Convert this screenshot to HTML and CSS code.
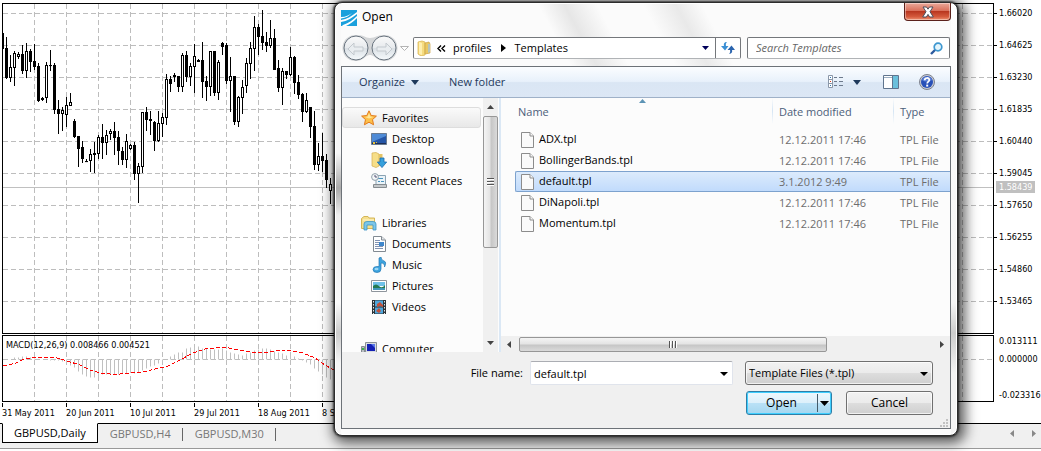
FILE: index.html
```html
<!DOCTYPE html>
<html lang="en">
<head>
<meta charset="utf-8">
<title>Open template</title>
<link rel="stylesheet" href="styles.css">
</head>
<body>
<main class="terminal">
  <section class="pane">
    <svg class="plot price-plot" aria-label="GBPUSD daily chart">
      <defs>
        <pattern id="grid" width="32" height="32" patternUnits="userSpaceOnUse">
          <path class="grid-line" d="M0 9.5H32M31.5 0V32"/>
        </pattern>
        <pattern id="columns" width="32" height="32" patternUnits="userSpaceOnUse">
          <path class="grid-line" d="M31.5 0V32"/>
        </pattern>
      </defs>
      <rect width="100%" height="100%" fill="url(#grid)"/>
      <line class="bid-line" x1="0" x2="100%" y1="183.5" y2="183.5"/>
      <g id="candles" transform="translate(-3 -4)"></g>
    </svg>
    <div class="scale price-scale">
      <span>1.66020</span><span>1.64625</span><span>1.63230</span><span>1.61835</span><span>1.60440</span><span>1.59045</span><span>1.57650</span><span>1.56255</span><span>1.54860</span><span>1.53465</span>
      <b class="bid">1.58439</b>
    </div>
  </section>
  <section class="pane">
    <svg class="plot macd-plot" aria-label="MACD indicator">
      <rect width="100%" height="100%" fill="url(#columns)"/>
      <line class="grid-line" x1="0" x2="100%" y1="23.5" y2="23.5"/>
      <g transform="translate(-3 -336)">
        <path id="histogram" class="histogram"/>
        <path class="signal" d="M3 366L16 363 22 360 32 357.500 55 357.500 67 361 80 365 90 370 100 373 115 374.500 130 373 143 372 155 369 168 366 180 360 193 353 207 348.500 226 347.500 240 350 255 352.500 270 352 282 350 293 351 303 353 315 358 325 365 334 370"/>
      </g>
      <text class="macd-label" x="3" y="12">MACD(12,26,9) 0.008466 0.004521</text>
    </svg>
    <div class="scale macd-scale"><span>0.013111</span><span>0.000000</span><span>-0.023316</span></div>
  </section>
  <div class="dates">
    <span>31 May 2011</span><span>20 Jun 2011</span><span>10 Jul 2011</span><span>29 Jul 2011</span><span>18 Aug 2011</span><span>8 Sep 2011</span>
  </div>
  <nav class="tabs">
    <button class="tab active">GBPUSD,Daily</button>
    <button class="tab">GBPUSD,H4</button>
    <button class="tab">GBPUSD,M30</button>
    <svg class="tab-arrows" width="26" height="9" aria-hidden="true"><path d="M4 1V8L0 4.500ZM22 1V8L26 4.500Z"/></svg>
  </nav>
</main>

<div class="dialog" role="dialog" aria-labelledby="dialog-title">
  <header class="titlebar">
    <svg width="16" height="16" aria-hidden="true">
      <rect width="16" height="16" fill="#1aa0dc"/>
      <path d="M0 10C6 9 11 6 16 2V4C11 8 6 11 0 12ZM2 15C8 13 12 10 16 6V8C12 12 9 14 5 16H1ZM0 7C5 7 8 5 11 3 8 6 5 8 0 8.500Z" fill="#fff"/>
    </svg>
    <h1 id="dialog-title">Open</h1>
    <button class="close" aria-label="Close">
      <svg width="14" height="12" viewBox="0 0 14 12"><path d="M2 1H5.500L7 3.200 8.500 1H12L9 5.700 12.300 11H8.600L7 8.400 5.400 11H1.700L5 5.700Z" fill="#fff" stroke="#4b4f5c" stroke-width="1"/></svg>
    </button>
  </header>

  <div class="location">
    <svg class="history" width="68" height="28" aria-hidden="true">
      <defs><linearGradient id="orb" x2="0" y2="1"><stop stop-color="#fafafa"/><stop offset=".48" stop-color="#e8ebee"/><stop offset=".5" stop-color="#d9dfe4"/><stop offset="1" stop-color="#f6fafc"/></linearGradient></defs>
      <path d="M14 1C24 1 22 4 28 4S34 1 42 1C60 1 60 27 42 27 34 27 33 21 28 21S22 27 14 27C-4 27-4 1 14 1Z" fill="#d4d6d8"/>
      <g fill="url(#orb)" stroke="#68737e"><circle cx="14" cy="14" r="12"/><circle cx="42" cy="14" r="12"/></g>
      <g fill="#e9edf0" stroke="#c3c9ce"><path d="M6 15L12 9V13H21V17H12V21Z"/><path d="M50 15L44 9V13H35V17H44V21Z"/></g>
      <path d="M58.500 12.500H66.500L62.500 16.500Z" fill="#fff" stroke="#b4b4b4"/>
    </svg>
    <div class="address">
      <svg width="16" height="16" viewBox="0 0 16 16" aria-hidden="true"><path d="M2 2L6 1 9 2V15L5 16 2 14Z" fill="#f6dc80" stroke="#d6b04a" stroke-width=".7"/><path d="M9 3L13 2 14 4V13L9 14Z" fill="#e9c863" stroke="#caa244" stroke-width=".7"/><path d="M3 2L6 3V15L3 14Z" fill="#fff0b0"/><path d="M12 4H14V12L12 13Z" fill="#b5c4be"/></svg>
      <svg class="chevrons" width="9" height="7" aria-hidden="true"><path d="M4 .5L1 3.500 4 6.500M8 .5L5 3.500 8 6.500"/></svg>
      <span class="crumb">profiles</span>
      <svg width="5" height="8" aria-hidden="true"><path d="M0 0L5 4 0 8Z"/></svg>
      <span class="crumb">Templates</span>
      <svg class="address-caret" width="7" height="4" aria-hidden="true"><path d="M0 0H7L3.500 4Z" fill="#00005a"/></svg>
      <button class="refresh" aria-label="Refresh">
        <svg width="14" height="14" viewBox="0 0 14 14"><path d="M6 1C3 1 2.500 3 3 5H0L4 9.500 7.500 5H5C4.600 3.500 5 2 6 1Z" fill="#3b8fd4"/><path d="M8 13C11 12.500 11.500 11 11 9H14L10.500 4.500 6.500 9H9C9.500 10.500 9 12 8 13Z" fill="#2a64ae"/></svg>
      </button>
    </div>
    <div class="search">
      <input type="text" placeholder="Search Templates" aria-label="Search Templates">
      <svg width="13" height="13" viewBox="0 0 13 13" aria-hidden="true"><path d="M1 12L5.500 7.500" stroke="#2c5a9e" stroke-width="2.400"/><circle cx="8" cy="5" r="3.800" fill="#e4f5fc" stroke="#3e97d0" stroke-width="1.700"/></svg>
    </div>
  </div>

  <div class="client">
    <div class="toolbar">
      <button>Organize <svg width="8" height="5" aria-hidden="true"><path d="M0 0H8L4 5Z"/></svg></button>
      <button>New folder</button>
      <div class="tools">
        <button aria-label="Change view"><svg width="30" height="14" viewBox="0 0 30 14">
          <g fill="#fff" stroke="#8a97a8"><path d="M.5.5H4.500V12.500H.5ZM.5 4.500H4.500M.5 8.500H4.500"/></g>
          <path d="M6 2.500H9M11 2.500H15M6 6.500H9M11 6.500H15M6 10.500H9M11 10.500H15" stroke="#6d7a8c"/>
          <path d="M2 2H3V3H2ZM2 10H3V11H2Z" fill="#2878b8"/><path d="M2 6H3V7H2Z" fill="#d33a22"/>
          <path d="M25 5H33L29 9Z" fill="none"/></svg></button>
        <button class="view-caret" aria-label="More views"><svg width="8" height="5"><path d="M0 0H8L4 5Z"/></svg></button>
        <button aria-label="Preview pane"><svg width="16" height="14"><path d="M.5.5H15.500V13.500H.5Z" fill="#fff" stroke="#60758e"/><path d="M1 2.500H15" stroke="#9dafc2"/><path d="M10 1H15V13H10Z" fill="#6bc0dc"/><path d="M9.500 1V13" stroke="#60758e"/></svg></button>
        <button aria-label="Help"><svg width="16" height="16"><circle cx="8" cy="8" r="7.500" fill="#c9ccd4" stroke="#7d828e"/><circle cx="8" cy="8" r="6" fill="#2850b8"/><path d="M3 6A5.500 5.500 0 0 1 13 6C10 8 6 8 3 6Z" fill="#5d82d8"/><path d="M5.700 6.300C5.700 3.200 10.400 3.300 10.300 6 10.200 7.700 8.200 7.500 8.200 9.600" fill="none" stroke="#fff" stroke-width="1.700"/><rect x="7.200" y="10.600" width="2" height="2" fill="#fff"/></svg></button>
      </div>
    </div>

    <div class="browser">
      <ul class="places">
        <li class="group current"><svg viewBox="0 0 16 16"><path d="M8 .8L10.200 5.500 15.400 6.100 11.500 9.600 12.600 14.800 8 12.200 3.400 14.800 4.500 9.600.6 6.100 5.800 5.500Z" fill="#fdc04a" stroke="#e27a1c"/><path d="M8 3L9.300 6.500 12.500 7 8 8.500 4 7 6.700 6.500Z" fill="#ffe79a"/></svg>Favorites</li>
        <li><svg viewBox="0 0 16 16"><path d="M.5 2.500H15.500V13.500H.5Z" fill="#2455a6" stroke="#697b91"/><path d="M1 3H15V5L1 11Z" fill="#4f8bd6"/><path d="M1 12.500H15" stroke="#1c2e55"/><path d="M2 11H4V13H2ZM5 11H6V12H5Z" fill="#e8c338"/></svg>Desktop</li>
        <li><svg viewBox="0 0 16 16"><path d="M1 1L5 .5 8 2V14L5 15.500 1 14Z" fill="#f6de88" stroke="#d2ae50" stroke-width=".7"/><path d="M8 2H11.500V13L8 14Z" fill="#e5c466"/><path d="M9 6H13V10H15.700L11 15.600 6.300 10H9Z" fill="#36a0dc" stroke="#1a6cb0" stroke-width=".8"/></svg>Downloads</li>
        <li><svg viewBox="0 0 16 16"><path d="M5 2.500H14.500V11.500H5Z" fill="#eaf3f8" stroke="#8ba3b3"/><path d="M7 5.500H12M7 8.500H9M10 8.500H13" stroke="#4b94bd"/><path d="M2.500 11.500H15.500V14.500H2.500Z" fill="#c5c9cb" stroke="#868c90"/><circle cx="4" cy="4" r="3.400" fill="#f3f6f8" stroke="#92a1ab"/><path d="M4 2V4H6" fill="none" stroke="#557"/></svg>Recent Places</li>
        <li class="group spaced"><svg viewBox="0 0 16 16"><path d="M.5 13.500V3.500L3 1.500H7L8 3H13.500V13.500Z" fill="#f6df8e" stroke="#d4b656"/><path d="M2 5H13" stroke="#fff6cd"/><path d="M3 15V9Q3 6.500 6 6.500H12Q15 6.500 15 9V15H12V10H6V15Z" fill="#7cc6e8" stroke="#3d95c4" stroke-width=".8"/></svg>Libraries</li>
        <li><svg viewBox="0 0 16 16"><path d="M2.500.5H10.500L14.500 4V15.500H2.500Z" fill="#fff" stroke="#828a92"/><path d="M10.500.5V4H14.500" fill="#e3e6e9" stroke="#828a92"/><path d="M4 4.500H9M4 6.500H8M4 8.500H8M4 10.500H12M4 12.500H12" stroke="#8293b2"/><path d="M8 6H13V10H8Z" fill="#3f87cc"/></svg>Documents</li>
        <li><svg viewBox="0 0 16 16"><path d="M8 1L10 0Q10 3 13 4T13.500 10Q14 6 10 6V12Q10 15.500 6 15.500T2 12.500 6 9.500H8Z" fill="#3da4df" stroke="#2279b5" stroke-width=".7"/><ellipse cx="5.500" cy="12" rx="2" ry="1.200" fill="#9ad6f5"/></svg>Music</li>
        <li><svg viewBox="0 0 16 16"><path d="M.5 2.500H15.500V13.500H.5Z" fill="#fff" stroke="#8e959c"/><path d="M2 4H14V8H2Z" fill="#6fc1e9"/><path d="M2 8Q5 5 8 8T14 7V10H2Z" fill="#247a52"/><path d="M2 10H14V12H2Z" fill="#4297bb"/></svg>Pictures</li>
        <li><svg viewBox="0 0 16 16"><path d="M1 1H15V15H1Z" fill="#2c3237"/><path d="M4 1.500H12V7.500H4ZM4 8.500H12V14.500H4Z" fill="#4fa7dc"/><path d="M6 5L9 3 12 6V8L9 7 6 8ZM5 12L8 9 10 12 8 14Z" fill="#c3513a"/><path d="M2.500 2V15M13.500 2V15" stroke="#dfe5e8" stroke-dasharray="1.500 1.500"/></svg>Videos</li>
        <li class="group spaced"><svg viewBox="0 0 16 16"><path d="M4.500 1.500H15.500V11.500H4.500Z" fill="#d8dce0" stroke="#8b9197"/><path d="M6 3H14V10H6Z" fill="#1420b4"/><path d="M10 3H14V7Z" fill="#5a78e8"/><path d="M.5 5.500H3.500V14.500H.5Z" fill="#b9bec2" stroke="#858b90"/><path d="M1 7H3V9H1Z" fill="#37b34a"/></svg>Computer</li>
      </ul>
      <div class="vscroll" aria-hidden="true">
        <svg width="7" height="4"><path d="M0 4H7L3.500 0Z"/></svg>
        <div class="thumb"><i></i></div>
        <svg width="7" height="4"><path d="M0 0H7L3.500 4Z"/></svg>
      </div>
      <div class="files">
        <table>
          <colgroup><col class="col-name"><col class="col-date"><col></colgroup>
          <thead><tr><th>Name<svg class="sort" width="7" height="4" aria-hidden="true"><path d="M0 4H7L3.500 0Z"/></svg></th><th>Date modified</th><th>Type</th></tr></thead>
          <tbody>
            <tr><td><svg viewBox="0 0 13 16"><path d="M.5.5H9L12.500 4V15.500H.5Z"/><path d="M9 .5V4H12.500"/></svg>ADX.tpl</td><td>12.12.2011 17:46</td><td>TPL File</td></tr>
            <tr><td><svg viewBox="0 0 13 16"><path d="M.5.5H9L12.500 4V15.500H.5Z"/><path d="M9 .5V4H12.500"/></svg>BollingerBands.tpl</td><td>12.12.2011 17:46</td><td>TPL File</td></tr>
            <tr class="selected"><td><svg viewBox="0 0 13 16"><path d="M.5.5H9L12.500 4V15.500H.5Z"/><path d="M9 .5V4H12.500"/></svg>default.tpl</td><td>3.1.2012 9:49</td><td>TPL File</td></tr>
            <tr><td><svg viewBox="0 0 13 16"><path d="M.5.5H9L12.500 4V15.500H.5Z"/><path d="M9 .5V4H12.500"/></svg>DiNapoli.tpl</td><td>12.12.2011 17:46</td><td>TPL File</td></tr>
            <tr><td><svg viewBox="0 0 13 16"><path d="M.5.5H9L12.500 4V15.500H.5Z"/><path d="M9 .5V4H12.500"/></svg>Momentum.tpl</td><td>12.12.2011 17:46</td><td>TPL File</td></tr>
          </tbody>
        </table>
        <div class="hscroll" aria-hidden="true">
          <svg width="4" height="7"><path d="M4 0V7L0 3.500Z"/></svg>
          <div class="thumb"><i></i></div>
          <svg width="4" height="7"><path d="M0 0V7L4 3.500Z"/></svg>
        </div>
      </div>
    </div>

    <form class="footer">
      <div class="fields">
        <label for="file-name">File name:</label>
        <div class="combo">
          <input id="file-name" type="text" value="default.tpl">
          <svg width="8" height="4" aria-hidden="true"><path d="M0 0H8L4 4Z"/></svg>
        </div>
        <div class="filter">
          <select aria-label="File type"><option>Template Files (*.tpl)</option></select>
          <svg width="8" height="4" aria-hidden="true"><path d="M0 0H8L4 4Z"/></svg>
        </div>
      </div>
      <div class="actions">
        <div class="split">
          <button type="button">Open</button>
          <button type="button" class="split-caret" aria-label="Open options"><svg width="9" height="5"><path d="M0 0H9L4.500 5Z"/></svg></button>
        </div>
        <button type="button" class="cancel">Cancel</button>
      </div>
      <svg class="grip" width="8" height="8" aria-hidden="true"><path d="M6 0H8V2H6ZM3 3H5V5H3ZM6 3H8V5H6ZM0 6H2V8H0ZM3 6H5V8H3ZM6 6H8V8H6Z"/></svg>
    </form>
  </div>
</div>
<script src="chart.js"></script>
</body>
</html>
```
FILE: styles.css
```css
* { box-sizing: border-box; }

body {
  margin: 0;
  background: #fff;
  color: #000;
  font: 11px/16px "Open Sans", "Noto Sans", sans-serif;
}

button, input, select { font: inherit; color: inherit; }
button { border: 0; padding: 0; background: none; }
svg { display: block; flex: none; }

/* Chart window */
.terminal {
  display: flex;
  flex-direction: column;
  min-height: 100vh;
  padding-top: 3px;
  overflow: hidden;
  font: 9px/12px "DejaVu Sans Condensed", "DejaVu Sans", sans-serif;
}
.pane { display: flex; margin: 0 0 1px 2px; }
.plot { flex: 1; min-width: 0; border: 1px solid #000; }
.price-plot { height: 331px; }
.macd-plot { height: 67px; }
.grid-line { fill: none; stroke: #bdbdbd; stroke-dasharray: 5 3; }
.bid-line { stroke: #c0c0c0; }
.histogram { stroke: #c0c0c0; }
.signal { fill: none; stroke: #f00; stroke-dasharray: 4 2; shape-rendering: crispEdges; }
.candle-wick { stroke: #000; }
.candle-body { stroke: #000; }
.candle-body.up { fill: #fff; }

.scale { position: relative; display: flex; flex-direction: column; width: 47px; }
.scale span { display: flex; align-items: center; gap: 2px; }
.price-scale { padding-top: 4px; gap: 20px; }
.price-scale span::before { content: ""; width: 3px; height: 1px; background: #000; }
.bid {
  position: absolute;
  top: 178px;
  left: 2px;
  width: 39px;
  padding-left: 3px;
  background: #c0c0c0;
  color: #fff;
  font-weight: normal;
}
.macd-scale { padding-left: 5px; gap: 6px; }
.macd-scale span:last-child { margin-top: 18px; }

.dates { display: flex; padding-left: 2px; height: 20px; }
.dates span { width: 64px; padding-top: 4px; background: linear-gradient(#000, #000) 0 0 / 1px 4px no-repeat; white-space: nowrap; }

.tabs {
  display: flex;
  flex: 1;
  align-items: flex-start;
  padding-left: 2px;
  border-top: 1px solid #000;
  background: #f0f0f0;
  box-shadow: inset 0 -2px #fff, inset 0 -3px #999;
  font: 11px/16px "Open Sans", sans-serif;
}
.tab { position: relative; padding: 2px 12px 0; color: #777; }
.tab:not(.active)::after { content: ""; position: absolute; right: 0; top: 4px; height: 13px; border-right: 1px solid #666; }
.tab.active { padding: 1px 11px; margin-top: -1px; border: 1px solid #000; border-top-color: #fff; background: #fff; color: #000; }
.tab-arrows { margin: 5px 5px 0 auto; fill: #888; }

/* Dialog window */
.dialog {
  position: absolute;
  top: 2px;
  left: 334px;
  right: 83px;
  padding: 0 6px 6px;
  border: 1px solid #2c2c2c;
  border-radius: 8px;
  background:
    linear-gradient(#fafafa 0, #f6f6f6 150px, #aaa 185px, #eee 212px, #fafafa 300px, #ccc 330px, #f6f6f6 360px) 0 0 / 6px 100% no-repeat,
    linear-gradient(#fff 0, #f4f4f4 300px, #ccc 330px, #f4f4f4 370px) 100% 0 / 6px 100% no-repeat,
    linear-gradient(62deg, transparent 36%, #e6e6e6 40%, transparent 45%, transparent 52%, #e9e9e9 57%, transparent 61%) 0 0 / 100% 64px no-repeat,
    #fbfbfb;
  box-shadow: inset 0 0 0 1px #fff, 0 0 2px 1px rgba(0, 0, 0, .65), 3px 3px 13px 4px rgba(0, 0, 0, .65);
}
.titlebar { display: flex; align-items: flex-start; gap: 5px; height: 34px; padding-top: 7px; }
.titlebar h1 { margin: -1px auto 0 0; font-size: 12px; font-weight: normal; line-height: 16px; }
.close {
  display: grid;
  place-items: center;
  width: 47px;
  height: 18px;
  margin-top: -7px;
  border: 1px solid #5b211b;
  border-top: 0;
  border-radius: 0 0 4px 4px;
  background: linear-gradient(#eba99a, #d9715c 45%, #b93720 50%, #d4593c 80%, #ee9272);
  box-shadow: inset 0 0 0 1px rgba(255, 255, 255, .4);
}
.location { display: flex; align-items: center; height: 22px; }
.history { margin: 0 3px 0 1px; }
.address, .search {
  display: flex;
  align-items: center;
  height: 22px;
  border: 1px solid #74777b;
  border-bottom-color: #b0b3b6;
  border-radius: 2px;
  background: #fff;
}
.address { flex: 1; padding-left: 2px; }
.chevrons { margin: 0 7px 0 5px; fill: none; stroke: #000; stroke-width: 1.4; }
.crumb { margin-right: 9px; }
.crumb + svg { margin-right: 9px; }
.crumb + .address-caret { margin: 0 6px 0 auto; }
.refresh { display: grid; place-items: center; width: 25px; height: 20px; border-left: 1px solid #74777b; }
.search { width: 203px; margin: 0 1px 0 6px; padding: 0 6px 0 8px; }
.search input { flex: 1; min-width: 0; padding: 0; border: 0; outline: 0; background: none; }
.search input::placeholder { color: #666; font-style: italic; opacity: 1; }

.client { margin-top: 7px; border: 1px solid #6d7278; background: #fcfcfc; }
.toolbar {
  display: flex;
  align-items: center;
  gap: 30px;
  height: 31px;
  padding: 0 15px 0 17px;
  border-bottom: 1px solid #9fb1c8;
  background: linear-gradient(#fbfdff, #e8f1fb 48%, #dae6f4 52%, #dce7f5);
  color: #1e395b;
}
.toolbar button { display: flex; align-items: center; gap: 6px; }
.toolbar svg { fill: #1e395b; }
.tools { display: flex; align-items: center; margin-left: auto; }
.tools button:first-child svg { width: 30px; margin-right: -5px; }
.tools .view-caret { margin-right: 22px; }
.tools button:last-child { margin-left: 20px; }

.browser { display: flex; height: 254px; }
.places {
  flex: none;
  width: 141px;
  margin: 0;
  padding: 9px 2px 0 0;
  overflow: hidden;
  list-style: none;
}
.places li { display: flex; align-items: center; gap: 5px; height: 21px; padding-left: 29px; white-space: nowrap; }
.places li svg { width: 16px; height: 16px; }
.places .group { padding-left: 19px; }
.places .spaced { margin-top: 21px; }
.places .current { padding-left: 18px; border: 1px solid #ddd; border-radius: 3px; background: linear-gradient(#fafafa, #e8e8e8); }

.vscroll, .hscroll { display: flex; align-items: center; background: #f0f0f0; }
.vscroll { flex-direction: column; width: 15px; padding: 7px 0; }
.vscroll svg, .hscroll svg { fill: #444; }
.thumb { display: grid; place-items: center; border: 1px solid #979797; border-radius: 2px; }
.vscroll .thumb { width: 15px; height: 132px; margin: 7px 0 auto; background: linear-gradient(90deg, #f4f4f4, #e4e4e4 45%, #c6c6c6 55%, #dadada); }
.hscroll .thumb { flex: 0 1 308px; height: 15px; margin: 0 auto 0 8px; background: linear-gradient(#f4f4f4, #e4e4e4 45%, #c6c6c6 55%, #dadada); }
.vscroll i { width: 7px; height: 8px; background: repeating-linear-gradient(#555 0 1px, #fff 1px 2px, transparent 2px 3px); }
.hscroll i { width: 8px; height: 7px; background: repeating-linear-gradient(90deg, #555 0 1px, #fff 1px 2px, transparent 2px 3px); }

.files { display: flex; flex: 1; flex-direction: column; min-width: 0; margin-left: 1px; border-left: 2px solid #dbe8f5; }
table { width: 100%; border-collapse: separate; border-spacing: 0; padding-left: 14px; table-layout: fixed; }
.col-name { width: 257px; }
.col-date { width: 121px; }
th, td { height: 21px; padding: 0 0 0 7px; text-align: left; }
th {
  position: relative;
  height: 31px;
  padding-bottom: 4px;
  color: #4c607a;
  font-weight: normal;
  background: linear-gradient(#fcfcfc, #d5e5f4 50%, #fcfcfc) 0 0 / 1px 26px no-repeat;
}
th:first-child { padding-left: 3px; background: none; }
.sort { position: absolute; top: 1px; left: 124px; fill: #5d94b5; }
td { color: #6d6d6d; }
td:first-child { padding-left: 6px; color: #000; }
td svg { display: inline-block; width: 13px; height: 16px; margin-right: 5px; vertical-align: middle; fill: #fafafa; stroke: #8c8c8c; }
.selected td {
  border: solid #7da2ce;
  border-width: 1px 0;
  background: linear-gradient(#dcebfc, #c1dbfc);
}
.selected td:first-child { border-left-width: 1px; border-radius: 2px 0 0 2px; padding-left: 5px; }
.hscroll { height: 16px; margin-top: auto; padding: 0 6px; }

.footer { position: relative; padding: 9px 17px 13px; background: #f0f0f0; }
.fields, .actions { display: flex; align-items: center; justify-content: flex-end; }
.combo, .filter { position: relative; height: 24px; }
.combo { flex: 0 1 203px; margin: 0 12px 0 7px; }
.filter { width: 188px; }
.combo input, .filter select { width: 100%; height: 24px; outline: 0; appearance: none; }
.combo input { padding: 0 18px 0 3px; border: 1px solid #e0e4ec; border-top-color: #abadb3; border-radius: 2px; background: #fff; }
.combo svg, .filter svg { position: absolute; top: 11px; right: 5px; pointer-events: none; }
.filter select, .cancel {
  border: 1px solid #707070;
  border-radius: 3px;
  background: linear-gradient(#f2f2f2, #ebebeb 48%, #dddddd 52%, #cfcfcf);
  box-shadow: inset 0 0 0 1px rgba(255, 255, 255, .7);
}
.filter select { padding: 0 20px 0 3px; }
.actions { gap: 14px; margin-top: 6px; }
.split {
  display: flex;
  width: 86px;
  height: 24px;
  border: 1px solid #2f7ea6;
  border-radius: 3px;
  background: linear-gradient(#eef8fd, #dcf0fb 48%, #b9e1f6 52%, #a4d6ef);
  box-shadow: inset 0 0 0 1px #3fcfff;
}
.split button:first-child { flex: 1; }
.split-caret { display: grid; place-items: center; width: 13px; margin: 2px 1px; border-left: 1px solid #445c6a; }
.cancel { width: 87px; height: 24px; }
.actions .cancel, .split { font-size: 12px; }
.grip { position: absolute; right: 2px; bottom: 1px; fill: #c2c2c2; }
```
FILE: chart.js
```js
// Each candle: high, low, body top, body bottom, 1 = rising (hollow).
const candles = [
  [33,49,33,48,0],[37,78,48,77,0],[55,81,67,77,1],[51,85,53,67,1],[52,58,54,56,1],[45,73,54,70,0],[43,77,51,70,1],
  [49,71,51,61,0],[44,69,61,66,0],[63,101,66,100,0],[97,100,98,99,0],[62,102,65,97,1],[50,70,65,65,0],[63,113,65,109,0],
  [100,133,109,113,0],[107,130,110,113,1],[97,126,105,114,1],[93,105,102,105,1],[119,137,121,136,0],[136,166,136,148,0],
  [141,162,147,158,0],[159,161,161,161,0],[149,171,154,160,1],[142,172,153,154,0],[135,158,137,153,1],[124,158,137,142,0],
  [130,154,135,142,1],[129,139,131,133,1],[122,154,131,137,0],[131,164,137,150,0],[147,164,151,159,0],[134,167,141,159,1],
  [144,149,145,148,1],[142,179,145,173,0],[163,202,166,173,1],[112,172,112,166,1],[107,130,112,119,0],[111,134,119,120,0],
  [121,150,122,140,0],[111,141,123,140,1],[113,136,117,123,1],[74,124,79,117,1],[76,91,79,83,0],[73,81,75,76,0],
  [76,91,76,86,0],[53,91,55,86,1],[51,81,55,76,0],[63,85,66,76,1],[44,92,56,66,1],[59,61,60,61,0],[42,97,60,81,0],
  [76,100,81,86,0],[51,95,51,86,1],[51,95,51,92,0],[60,99,62,92,1],[42,54,43,46,0],[43,83,45,80,0],[57,111,76,80,1],
  [76,124,76,121,0],[96,126,97,121,1],[80,113,87,97,1],[58,92,63,85,1],[42,78,48,63,1],[16,70,27,48,1],[24,54,27,36,0],
  [10,49,36,42,0],[32,51,42,45,0],[20,47,38,45,1],[29,69,38,69,0],[60,91,68,87,0],[68,104,71,87,1],[71,78,71,74,0],
  [47,75,57,74,1],[56,93,57,82,0],[75,98,82,94,0],[93,121,94,111,0],[93,112,100,111,1],[107,137,107,126,0],
  [111,169,126,164,0],[143,170,156,164,1],[133,171,156,160,0],[154,187,160,179,0],[178,203,184,190,1]
];

// Far end of each histogram bar; the zero line is at 359.
const bars = [
  359,359,359,357,357,356,356,357,358,359,359,359,360,360,360,361,363,365,367,371,374,376,377,377,376,374,374,374,374,374,
  373,373,372,373,372,370,368,366,365,363,361,359,356,354,352,352,348,347,347,346,348,348,349,349,349,348,350,352,353,354,
  355,353,352,350,349,348,348,349,351,352,353,355,355,356,358,360,362,364,368,371,374,377,379
];

const NS = "http://www.w3.org/2000/svg";
const layer = document.getElementById("candles");

function add(name, attrs) {
  const node = document.createElementNS(NS, name);
  for (const key in attrs) node.setAttribute(key, attrs[key]);
  layer.appendChild(node);
}

candles.forEach(([high, low, top, bottom, up], i) => {
  const x = 2 + i * 4;
  add("line", { class: "candle-wick", x1: x + .5, x2: x + .5, y1: high, y2: low + 1 });
  add("rect", { class: up ? "candle-body up" : "candle-body", x: x - .5, y: top + .5, width: 2, height: Math.max(bottom - top, .1) });
});

document.getElementById("histogram").setAttribute(
  "d", bars.map((y, i) => `M${2.5 + i * 4} 359.5V${y + .5}`).join("")
);
```
